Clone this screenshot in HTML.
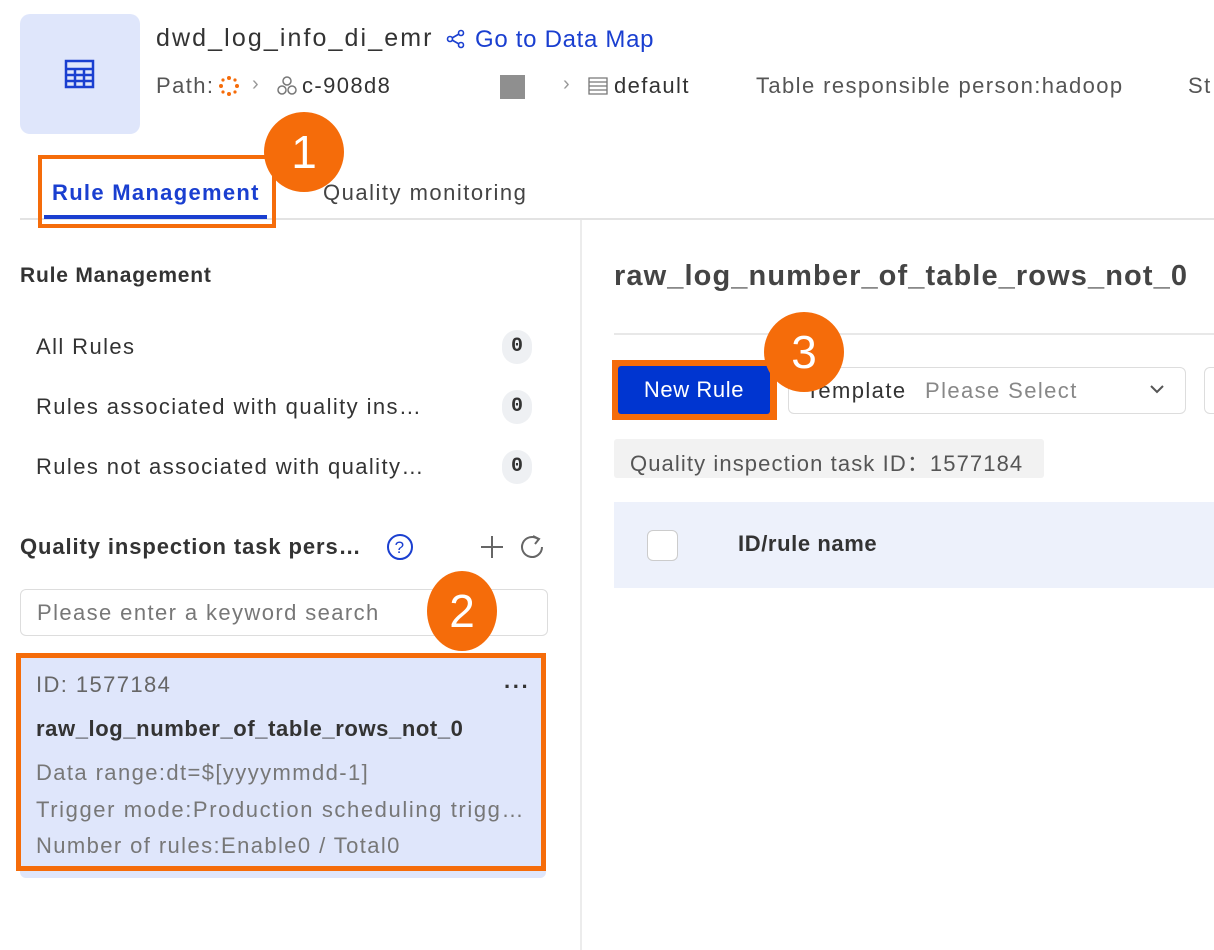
<!DOCTYPE html>
<html><head><style>
*{margin:0;padding:0;box-sizing:border-box}
body{width:1214px;height:950px;background:#fff;font-family:"Liberation Sans",sans-serif;color:#333;position:relative;overflow:hidden}
.a{position:absolute;white-space:nowrap;letter-spacing:1.4px}
.badge{position:absolute;border-radius:50%;background:#f56c0a;color:#fff;font-size:46px;text-align:center;font-weight:400;letter-spacing:0}
.cnt{position:absolute;left:502px;width:30px;height:34px;border-radius:17px;background:#eef0f3;font-family:"Liberation Mono",monospace;font-weight:bold;font-size:20px;text-align:center;line-height:34px;color:#333}
</style></head><body>
<div class="a" style="left:20px;top:14px;width:120px;height:120px;background:#dfe6fb;border-radius:10px"></div>
<svg class="a" style="left:64px;top:58px" width="32" height="32" viewBox="0 0 32 32"><rect x="2" y="3" width="27" height="26" fill="none" stroke="#1a3fd0" stroke-width="2.5"/><path d="M2 11H29M2 17H29M2 23H29M11 11V29M20 11V29" stroke="#1a3fd0" stroke-width="2.5"/></svg>
<div class="a" style="left:156px;top:24px;font-size:25px;color:#333;letter-spacing:2.1px">dwd_log_info_di_emr</div>
<svg class="a" style="left:446px;top:29px" width="20" height="20" viewBox="0 0 20 20"><circle cx="15" cy="4" r="2.5" fill="none" stroke="#1a3fd0" stroke-width="1.6"/><circle cx="4" cy="10" r="2.5" fill="none" stroke="#1a3fd0" stroke-width="1.6"/><circle cx="15" cy="16" r="2.5" fill="none" stroke="#1a3fd0" stroke-width="1.6"/><path d="M6 9L13 5M6 11L13 15" stroke="#1a3fd0" stroke-width="1.6"/></svg>
<div class="a" style="left:475px;top:26px;font-size:24px;color:#1a3fd0;letter-spacing:0.7px">Go to Data Map</div>
<div class="a" style="left:156px;top:73px;font-size:22px;color:#555">Path:</div>
<svg class="a" style="left:218px;top:75px" width="22" height="22" viewBox="0 0 22 22"><g fill="#f56c0a"><circle cx="11" cy="3" r="2"/><circle cx="11" cy="19" r="2"/><circle cx="3" cy="11" r="2"/><circle cx="19" cy="11" r="2"/><circle cx="5" cy="5" r="1.6"/><circle cx="17" cy="17" r="1.6"/><circle cx="17" cy="5" r="1.6"/><circle cx="5" cy="17" r="1.6"/></g></svg>
<div class="a" style="left:252px;top:73px;font-size:20px;color:#999">›</div>
<svg class="a" style="left:276px;top:75px" width="22" height="22" viewBox="0 0 22 22"><g fill="none" stroke="#777" stroke-width="1.5"><circle cx="11" cy="6" r="4"/><circle cx="6" cy="15" r="4"/><circle cx="16" cy="15" r="4"/></g></svg>
<div class="a" style="left:302px;top:73px;font-size:22px;color:#333;width:96px;overflow:hidden">c-908d8</div>
<div class="a" style="left:500px;top:75px;width:25px;height:24px;background:#8f8f8f"></div>
<div class="a" style="left:563px;top:73px;font-size:20px;color:#999">›</div>
<svg class="a" style="left:588px;top:77px" width="20" height="18" viewBox="0 0 20 18"><path d="M1 1H19V17H1ZM1 5H19M1 9H19M1 13H19" fill="none" stroke="#777" stroke-width="1.3"/></svg>
<div class="a" style="left:614px;top:73px;font-size:22px;color:#333">default</div>
<div class="a" style="left:756px;top:73px;font-size:22px;color:#555">Table responsible person:hadoop</div>
<div class="a" style="left:1188px;top:73px;font-size:22px;color:#555">St</div>

<div class="a" style="left:20px;top:218px;width:1194px;height:2px;background:#e3e3e3"></div>
<div class="a" style="left:52px;top:180px;font-size:22px;color:#1a3fd0;font-weight:bold;letter-spacing:1.3px">Rule Management</div>
<div class="a" style="left:44px;top:215px;width:223px;height:4px;background:#1a3fd0"></div>
<div class="a" style="left:38px;top:155px;width:238px;height:73px;border:4px solid #f56c0a"></div>
<div class="a" style="left:323px;top:180px;font-size:22px;color:#444;letter-spacing:1.5px">Quality monitoring</div>
<div class="badge" style="left:264px;top:112px;width:80px;height:80px;line-height:80px">1</div>

<div class="a" style="left:580px;top:220px;width:2px;height:730px;background:#ececec"></div>

<div class="a" style="left:20px;top:264px;font-size:21px;font-weight:bold;color:#333;letter-spacing:0.8px">Rule Management</div>
<div class="a" style="left:36px;top:334px;font-size:22px">All Rules</div>
<div class="cnt" style="top:330px">0</div>
<div class="a" style="left:36px;top:394px;font-size:22px">Rules associated with quality ins…</div>
<div class="cnt" style="top:390px">0</div>
<div class="a" style="left:36px;top:454px;font-size:22px">Rules not associated with quality…</div>
<div class="cnt" style="top:450px">0</div>

<div class="a" style="left:20px;top:534px;font-size:22px;font-weight:bold;color:#333;letter-spacing:0.9px">Quality inspection task pers…</div>
<svg class="a" style="left:386px;top:533px" width="28" height="28" viewBox="0 0 28 28"><circle cx="14" cy="14" r="12" fill="none" stroke="#1a3fd0" stroke-width="2"/><text x="14" y="20" text-anchor="middle" font-size="17" fill="#1a3fd0" font-family="Liberation Sans">?</text></svg>
<svg class="a" style="left:478px;top:533px" width="28" height="28"><path d="M14 3V25M3 14H25" stroke="#666" stroke-width="2"/></svg>
<svg class="a" style="left:518px;top:533px" width="28" height="28"><path d="M20 6A10 10 0 1 0 24 14" fill="none" stroke="#666" stroke-width="2"/><path d="M15 3L21 6L17 11" fill="none" stroke="#666" stroke-width="2"/></svg>
<div class="a" style="left:20px;top:589px;width:528px;height:47px;border:1.5px solid #ddd;border-radius:6px"></div>
<div class="a" style="left:37px;top:600px;font-size:22px;color:#777">Please enter a keyword search</div>
<div class="badge" style="left:427px;top:571px;width:70px;height:80px;line-height:80px;border-radius:50%">2</div>

<div class="a" style="left:20px;top:656px;width:526px;height:222px;background:#dfe6fb;border-radius:6px"></div>
<div class="a" style="left:16px;top:653px;width:530px;height:218px;border:5px solid #f56c0a"></div>
<div class="a" style="left:36px;top:672px;font-size:22px;color:#666">ID: 1577184</div>
<div class="a" style="left:504px;top:674px;font-size:22px;font-weight:bold;color:#333">···</div>
<div class="a" style="left:36px;top:716px;font-size:22px;font-weight:bold;color:#333;letter-spacing:0.6px">raw_log_number_of_table_rows_not_0</div>
<div class="a" style="left:36px;top:760px;font-size:22px;color:#777">Data range:dt=$[yyyymmdd-1]</div>
<div class="a" style="left:36px;top:797px;font-size:22px;color:#777;letter-spacing:1.6px">Trigger mode:Production scheduling trigg…</div>
<div class="a" style="left:36px;top:833px;font-size:22px;color:#777">Number of rules:Enable0 / Total0</div>

<div class="a" style="left:614px;top:260px;font-size:29px;font-weight:bold;color:#444;letter-spacing:1.1px">raw_log_number_of_table_rows_not_0</div>
<div class="a" style="left:614px;top:333px;width:600px;height:2px;background:#e8e8e8"></div>
<div class="a" style="left:612px;top:360px;width:165px;height:60px;background:#f56c0a"></div>
<div class="a" style="left:618px;top:366px;width:152px;height:48px;background:#0035d0;border-radius:3px;color:#fff;font-size:22px;text-align:center;line-height:48px;letter-spacing:0.6px">New Rule</div>
<div class="a" style="left:788px;top:367px;width:398px;height:47px;border:1.5px solid #ddd;border-radius:6px"></div>
<div class="a" style="left:806px;top:378px;font-size:22px;color:#333">Template</div>
<div class="a" style="left:925px;top:378px;font-size:22px;color:#888">Please Select</div>
<svg class="a" style="left:1148px;top:382px" width="18" height="14"><path d="M3 4L9 10L15 4" fill="none" stroke="#555" stroke-width="2"/></svg>
<div class="a" style="left:1204px;top:367px;width:20px;height:47px;border:1.5px solid #ddd;border-radius:6px"></div>
<div class="badge" style="left:764px;top:312px;width:80px;height:80px;line-height:80px">3</div>
<div class="a" style="left:614px;top:439px;width:430px;height:39px;background:#f2f2f2;border-radius:3px"></div>
<div class="a" style="left:630px;top:446px;font-size:22px;color:#555;letter-spacing:1.1px">Quality inspection task ID：1577184</div>
<div class="a" style="left:614px;top:502px;width:600px;height:86px;background:#edf1fb"></div>
<div class="a" style="left:647px;top:530px;width:31px;height:31px;background:#fff;border:1.5px solid #ccc;border-radius:6px"></div>
<div class="a" style="left:738px;top:531px;font-size:22px;font-weight:bold;color:#333;letter-spacing:0.6px">ID/rule name</div>
</body></html>
